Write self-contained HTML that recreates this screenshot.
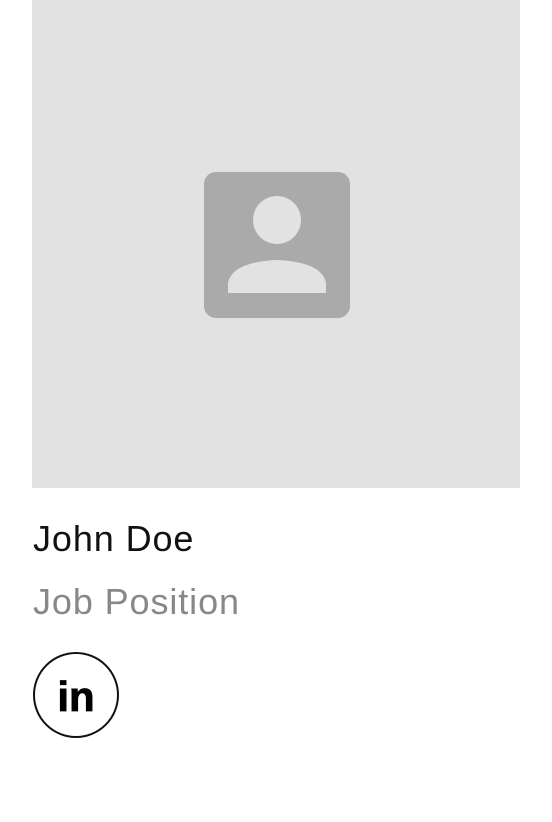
<!DOCTYPE html>
<html><head><style>
body{margin:0;width:552px;height:822px;background:#fff;position:relative;font-family:"Liberation Sans",sans-serif;overflow:hidden}
.img{position:absolute;left:32px;top:0;width:488px;height:488px;background:#e2e2e2}
.t{position:absolute;left:33px;white-space:nowrap;font-size:36px;letter-spacing:0.9px}
.c{position:absolute;left:33px;top:652px;width:82px;height:82px;border:2px solid #111;border-radius:50%}
</style></head><body>
<div class="img"></div>
<svg style="position:absolute;left:0;top:0" width="552" height="488">
<rect x="204" y="172" width="146" height="146" rx="12" fill="#aaaaaa"/>
<circle cx="277" cy="220" r="24" fill="#e2e2e2"/>
<path d="M228 293 L228 283 Q232 262 277 260 Q322 262 326 283 L326 293 Z" fill="#e2e2e2"/>
</svg>
<div class="t" style="top:518px;color:#111">John Doe</div>
<div class="t" style="top:581px;color:#888">Job Position</div>
<div class="c"></div>
<div style="position:absolute;left:33px;top:675px;width:86px;text-align:center;font-weight:bold;font-size:42px;color:#000;line-height:44px;-webkit-text-stroke:0.8px #000">in</div>
</body></html>
